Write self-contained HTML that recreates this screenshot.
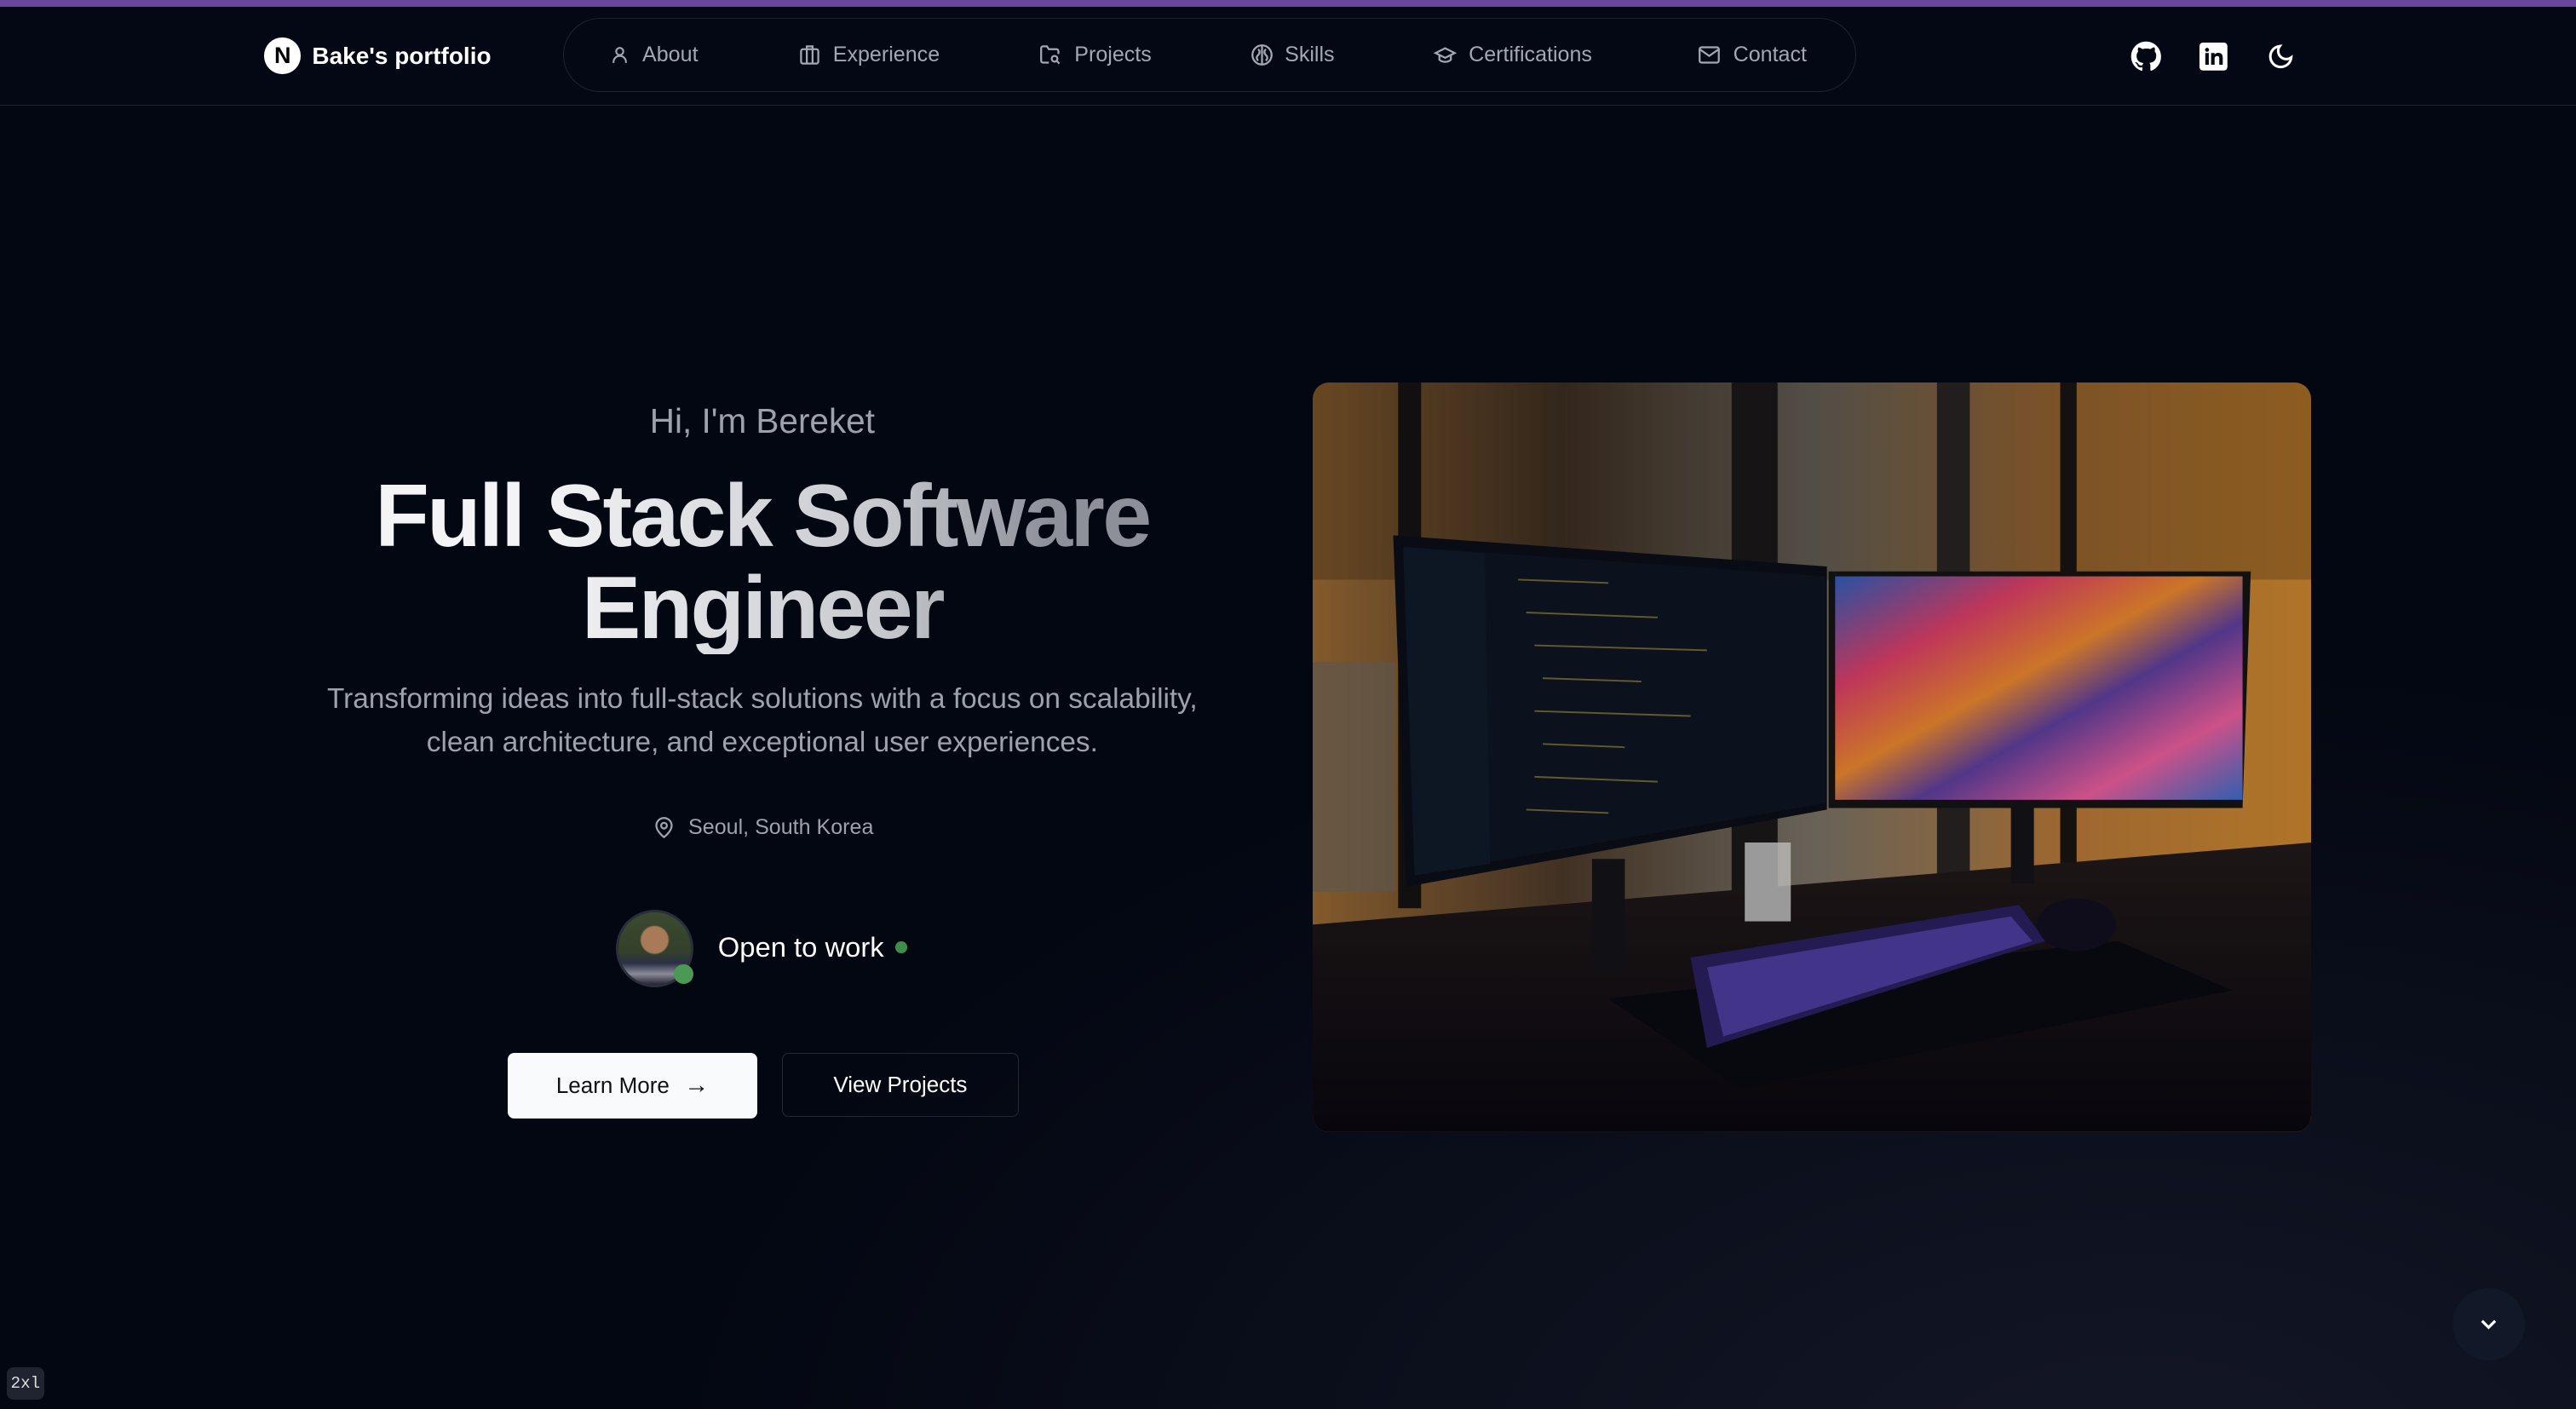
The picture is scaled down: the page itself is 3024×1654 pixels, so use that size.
<!DOCTYPE html>
<html><head><meta charset="utf-8"><style>
html,body{margin:0;padding:0;width:3024px;height:1654px;overflow:hidden;background:#030712;}
#z{zoom:1.92857;width:1568px;height:858px;position:relative;font-family:"Liberation Sans",sans-serif;
background:radial-gradient(ellipse 900px 500px at 1300px 900px,#141726 0%,rgba(3,7,18,0) 100%),#030712;overflow:hidden}
.a{position:absolute}
.nav a{position:absolute;top:26px;font-size:13px;color:#a3a7b1;display:flex;align-items:center;gap:7px;white-space:nowrap}
svg{display:block}
</style></head><body><div id="z">
<div class="a" style="left:0;top:0;width:1568px;height:4px;background:#6b46a0"></div>
<div class="a" style="left:0;top:4px;width:1568px;height:60px;background:#040814;border-bottom:1px solid #1b202c"></div>
<div class="a" style="left:161px;top:23px;width:22px;height:22px;border-radius:50%;background:#fff;color:#000;font-size:14px;font-weight:bold;text-align:center;line-height:22px">N</div>
<div class="a" style="left:190px;top:26px;font-size:14.5px;font-weight:bold;color:#fff">Bake's portfolio</div>
<div class="a" style="left:343px;top:11px;width:786px;height:44px;border:1px solid #1d2231;border-radius:24px"></div>
<div class="nav">
<a style="left:371px"><svg width="13" height="13" viewBox="0 0 24 24" fill="none" stroke="#a3a7b1" stroke-width="2"><circle cx="12" cy="8" r="4"/><path d="M5 21v-1a7 7 0 0 1 14 0v1"/></svg>About</a>
<a style="left:486px"><svg width="14" height="14" viewBox="0 0 24 24" fill="none" stroke="#a3a7b1" stroke-width="2"><rect x="3" y="6" width="18" height="15" rx="2"/><path d="M9 6V3h6v3M9 6v15M15 6v15"/></svg>Experience</a>
<a style="left:632px"><svg width="15" height="14" viewBox="0 0 24 24" fill="none" stroke="#a3a7b1" stroke-width="2"><path d="M10 20H4a2 2 0 0 1-2-2V5a2 2 0 0 1 2-2h4l2 3h8a2 2 0 0 1 2 2v3"/><circle cx="16" cy="16" r="3"/><path d="M18 18l3 3"/></svg>Projects</a>
<a style="left:761px"><svg width="14" height="14" viewBox="0 0 24 24" fill="none" stroke="#a3a7b1" stroke-width="2"><circle cx="12" cy="12" r="10"/><path d="M12 2v20M8 6c2 2 2 4 0 6s-2 4 0 6M16 6c-2 2-2 4 0 6s2 4 0 6"/></svg>Skills</a>
<a style="left:872px"><svg width="15" height="14" viewBox="0 0 24 24" fill="none" stroke="#a3a7b1" stroke-width="2"><path d="M22 10L12 5 2 10l10 5 10-5z"/><path d="M6 12v5c3 3 9 3 12 0v-5"/></svg>Certifications</a>
<a style="left:1033px"><svg width="15" height="14" viewBox="0 0 24 24" fill="none" stroke="#a3a7b1" stroke-width="2"><rect x="2" y="4" width="20" height="16" rx="2"/><path d="M2 6l10 7 10-7"/></svg>Contact</a>
</div>
<svg class="a" style="left:1297px;top:25px" width="19" height="19" viewBox="0 0 24 24" fill="#fff"><path d="M12 .5C5.6.5.5 5.6.5 12c0 5.1 3.3 9.4 7.9 10.9.6.1.8-.3.8-.6v-2c-3.2.7-3.900-1.5-3.9-1.5-.5-1.3-1.3-1.7-1.3-1.7-1-.7.1-.7.1-.7 1.2.1 1.8 1.2 1.8 1.2 1 1.8 2.7 1.3 3.4 1 .1-.8.4-1.3.7-1.600-2.6-.3-5.3-1.3-5.3-5.7 0-1.3.5-2.3 1.2-3.1-.1-.3-.5-1.5.1-3.1 0 0 1-.3 3.3 1.2a11 11 0 0 1 6 0C17.5 4.6 18.5 5 18.5 5c.6 1.6.2 2.8.1 3.1.8.8 1.2 1.8 1.2 3.1 0 4.4-2.7 5.4-5.3 5.7.4.4.8 1.1.8 2.2v3.2c0 .3.2.7.8.6A11.5 11.5 0 0 0 23.5 12C23.5 5.6 18.4.5 12 .5z"/></svg>
<svg class="a" style="left:1339px;top:26px" width="17" height="17" viewBox="0 0 24 24"><rect width="24" height="24" rx="3" fill="#fff"/><path d="M5 9h3v10H5zM6.5 4.5a1.7 1.7 0 1 1 0 3.4 1.7 1.7 0 0 1 0-3.4zM10 9h3v1.4c.5-.9 1.6-1.6 3.2-1.6 3 0 3.8 1.9 3.8 4.6V19h-3v-5c0-1.3-.2-2.5-1.700-2.5s-2.3 1-2.3 2.5v5h-3z" fill="#040814"/></svg>
<svg class="a" style="left:1380px;top:26px" width="17" height="17" viewBox="0 0 24 24" fill="none" stroke="#fff" stroke-width="2.2"><path d="M21 12.8A9 9 0 1 1 11.2 3a7 7 0 0 0 9.8 9.8z"/></svg>

<div class="a" style="left:164px;width:600px;top:244px;text-align:center;font-size:21px;color:#9ca1ac">Hi, I'm Bereket</div>
<div class="a" style="left:114px;width:700px;top:286px;text-align:center;font-size:54px;font-weight:bold;letter-spacing:-1.4px;line-height:56px;background:linear-gradient(90deg,#f4f4f6 30%,#c8cad0 60%,#8d9099 75%);-webkit-background-clip:text;background-clip:text;color:transparent">Full Stack Software<br>Engineer</div>
<div class="a" style="left:184px;width:560px;top:413px;text-align:center;font-size:17.3px;line-height:26px;color:#9ca3af">Transforming ideas into full-stack solutions with a focus on scalability, clean architecture, and exceptional user experiences.</div>
<div class="a" style="left:397px;top:496px;display:flex;align-items:center;gap:8px;font-size:13px;color:#9ca3af"><svg width="14" height="15" viewBox="0 0 24 24" fill="none" stroke="#9ca3af" stroke-width="2"><path d="M20 10c0 6-8 12-8 12S4 16 4 10a8 8 0 0 1 16 0z"/><circle cx="12" cy="10" r="3"/></svg>Seoul, South Korea</div>
<div class="a" style="left:375px;top:554px;width:44px;height:44px;border-radius:50%;border:2px solid #2a2f3c;background:radial-gradient(circle at 50% 38%,#a87a58 0 8px,transparent 9px),linear-gradient(180deg,#3b4a30 0%,#34402a 55%,#2a2f45 70%,#8a8a98 85%,#223 100%)"></div>
<div class="a" style="left:410px;top:587px;width:12px;height:12px;border-radius:50%;background:#4a9a55"></div>
<div class="a" style="left:437px;top:567px;font-size:17px;color:#fff">Open to work</div>
<div class="a" style="left:545px;top:573px;width:7px;height:7px;border-radius:50%;background:#3e8e4a"></div>
<div class="a" style="left:309px;top:641px;width:152px;height:40px;background:#f8fafc;border-radius:4px;color:#111;font-size:13.5px;display:flex;align-items:center;justify-content:center;gap:9px">Learn More <span style="font-size:15px">→</span></div>
<div class="a" style="left:476px;top:641px;width:143px;height:38px;border:1px solid #232837;border-radius:4px;color:#fff;font-size:13.5px;display:flex;align-items:center;justify-content:center">View Projects</div>

<div class="a" style="left:799px;top:233px;width:608px;height:456px;border-radius:10px;overflow:hidden">
<svg width="608" height="456" viewBox="0 0 608 456">
<defs>
<linearGradient id="bg" x1="0" y1="0" x2="1" y2="0"><stop offset="0" stop-color="#9a6a34"/><stop offset=".25" stop-color="#4d3a2a"/><stop offset=".5" stop-color="#7a7468"/><stop offset=".75" stop-color="#b87a3a"/><stop offset="1" stop-color="#d08a30"/></linearGradient>
<linearGradient id="sc" x1="0" y1="0" x2="1" y2="1"><stop offset="0" stop-color="#3060c0"/><stop offset=".25" stop-color="#e0406a"/><stop offset=".45" stop-color="#f08a30"/><stop offset=".6" stop-color="#6040a0"/><stop offset=".8" stop-color="#f060a0"/><stop offset="1" stop-color="#3a70d0"/></linearGradient>
<linearGradient id="dk" x1="0" y1="0" x2="0" y2="1"><stop offset="0" stop-color="#221a1a"/><stop offset="1" stop-color="#0a0810"/></linearGradient>
</defs>
<rect width="608" height="456" fill="url(#bg)"/>
<rect x="0" y="0" width="608" height="120" fill="#000" opacity=".2"/>
<rect x="52" y="0" width="14" height="320" fill="#141212"/>
<rect x="255" y="0" width="28" height="330" fill="#1a1818"/>
<rect x="380" y="0" width="20" height="330" fill="#2a2424"/>
<rect x="455" y="0" width="10" height="330" fill="#1a1414"/>
<rect x="0" y="170" width="50" height="140" fill="#6a6560" opacity=".6"/>
<polygon points="0,330 608,280 608,456 0,456" fill="url(#dk)"/>
<polygon points="49,93 313,112 313,260 57,307" fill="#0b0f18"/>
<polygon points="55,100 312,118 312,256 62,300" fill="#0e1624"/>
<polygon points="55,100 105,104 108,293 62,300" fill="#101a2a"/>
<g stroke="#c8b040" stroke-width="1" opacity=".55">
<line x1="125" y1="120" x2="180" y2="122"/><line x1="130" y1="140" x2="210" y2="143"/><line x1="135" y1="160" x2="240" y2="163"/><line x1="140" y1="180" x2="200" y2="182"/><line x1="135" y1="200" x2="230" y2="203"/><line x1="140" y1="220" x2="190" y2="222"/><line x1="135" y1="240" x2="210" y2="243"/><line x1="130" y1="260" x2="180" y2="262"/></g>
<polygon points="314,115 571,115 566,259 314,259" fill="#151515"/>
<rect x="318" y="118" width="248" height="136" fill="url(#sc)"/>
<rect x="170" y="290" width="20" height="70" fill="#151318"/>
<rect x="425" y="255" width="14" height="50" fill="#151318"/>
<rect x="263" y="280" width="28" height="48" fill="#ddd" opacity=".8"/>
<polygon points="180,375 490,340 560,370 260,430" fill="#0a0a12"/>
<polygon points="230,350 430,318 446,340 240,405" fill="#2a2060"/>
<polygon points="240,356 425,325 438,340 250,398" fill="#6a58d8" opacity=".55"/>
<ellipse cx="465" cy="330" rx="24" ry="16" fill="#121020"/>
<rect x="0" y="0" width="608" height="456" fill="#000" opacity=".15"/>
</svg></div>

<div class="a" style="left:1493px;top:784px;width:44px;height:44px;border-radius:50%;background:#111827;display:flex;align-items:center;justify-content:center"><svg width="16" height="16" viewBox="0 0 24 24" fill="none" stroke="#fff" stroke-width="2.5"><path d="M6 9l6 6 6-6"/></svg></div>
<div class="a" style="left:4px;top:832px;width:23px;height:20px;border-radius:4px;background:#1f2430;color:#ddd;font-family:'Liberation Mono',monospace;font-size:10px;line-height:20px;text-align:center">2xl</div>
</div></body></html>
